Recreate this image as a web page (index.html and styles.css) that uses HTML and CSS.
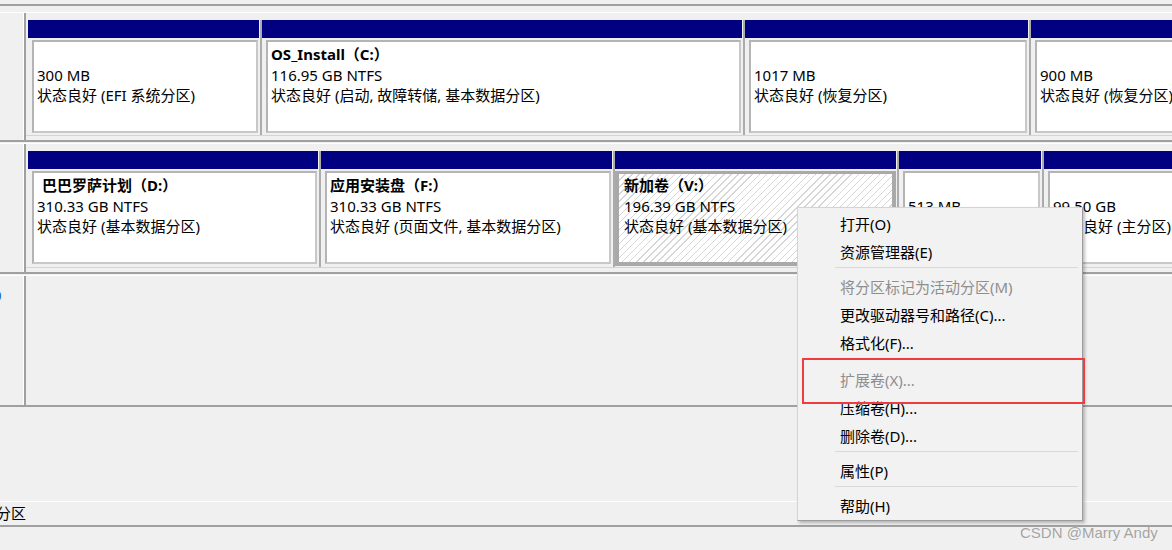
FILE: index.html
```html
<!DOCTYPE html>
<html lang="zh-CN">
<head>
    <meta charset="UTF-8">
    <title>磁盘管理</title>
    <link rel="stylesheet" href="styles.css">
</head>
<body>

    <div class="top-edge"></div>

    <!-- 磁盘 0 -->
    <div class="disk">
        <div class="disk-label"></div>
        <div class="parts">
            <div class="part w-231">
                <div class="bar"></div>
                <div class="vol">
                    <div class="name">&nbsp;</div>
                    <div>300 MB</div>
                    <div>状态良好 (EFI 系统分区)</div>
                </div>
            </div>
            <div class="part w-480">
                <div class="bar"></div>
                <div class="vol">
                    <div class="name">OS_Install（C:）</div>
                    <div>116.95 GB NTFS</div>
                    <div>状态良好 (启动, 故障转储, 基本数据分区)</div>
                </div>
            </div>
            <div class="part w-283">
                <div class="bar"></div>
                <div class="vol">
                    <div class="name">&nbsp;</div>
                    <div>1017 MB</div>
                    <div>状态良好 (恢复分区)</div>
                </div>
            </div>
            <div class="part w-200">
                <div class="bar"></div>
                <div class="vol">
                    <div class="name">&nbsp;</div>
                    <div>900 MB</div>
                    <div>状态良好 (恢复分区)</div>
                </div>
            </div>
        </div>
    </div>

    <!-- 磁盘 1 -->
    <div class="disk">
        <div class="disk-label"></div>
        <div class="parts">
            <div class="part w-290">
                <div class="bar"></div>
                <div class="vol">
                    <div class="name indent">巴巴罗萨计划（D:）</div>
                    <div>310.33 GB NTFS</div>
                    <div>状态良好 (基本数据分区)</div>
                </div>
            </div>
            <div class="part w-291">
                <div class="bar"></div>
                <div class="vol">
                    <div class="name">应用安装盘（F:）</div>
                    <div>310.33 GB NTFS</div>
                    <div>状态良好 (页面文件, 基本数据分区)</div>
                </div>
            </div>
            <div class="part w-281">
                <div class="bar"></div>
                <div class="vol selected">
                    <div class="name">新加卷（V:）</div>
                    <div>196.39 GB NTFS</div>
                    <div>状态良好 (基本数据分区)</div>
                </div>
            </div>
            <div class="part w-142">
                <div class="bar"></div>
                <div class="vol">
                    <div class="name">&nbsp;</div>
                    <div>513 MB</div>
                    <div>状态良好 (恢复分区)</div>
                </div>
            </div>
            <div class="part w-200">
                <div class="bar"></div>
                <div class="vol">
                    <div class="name">&nbsp;</div>
                    <div>99.50 GB</div>
                    <div>状态良好 (主分区)</div>
                </div>
            </div>
        </div>
    </div>

    <!-- CD-ROM -->
    <div class="disk disk-empty">
        <div class="disk-label">
            <div class="label-text">0</div>
        </div>
        <div class="parts"></div>
    </div>

    <div class="legend">
        <span class="legend-text">主分区</span>
    </div>

    <div class="menu">
        <div class="menu-item">打开(O)</div>
        <div class="menu-item">资源管理器(E)</div>
        <div class="menu-sep"></div>
        <div class="menu-item disabled">将分区标记为活动分区(M)</div>
        <div class="menu-item">更改驱动器号和路径(C)...</div>
        <div class="menu-item">格式化(F)...</div>
        <div class="menu-item disabled gap">扩展卷(X)...</div>
        <div class="menu-item">压缩卷(H)...</div>
        <div class="menu-item">删除卷(D)...</div>
        <div class="menu-sep"></div>
        <div class="menu-item">属性(P)</div>
        <div class="menu-sep"></div>
        <div class="menu-item">帮助(H)</div>
    </div>

    <div class="callout"></div>

    <div class="watermark">CSDN @Marry Andy</div>

</body>
</html>
```

FILE: styles.css
```css
body {
    margin: 0;
    width: 1172px;
    height: 550px;
    overflow: hidden;
    position: relative;
    background-color: #f0f0f0;
    font-family: "Noto Sans", "Noto Sans CJK SC", sans-serif;
    font-size: 15px;
    color: #000;
}
.top-edge {
    height: 4px;
    border-bottom: 2px solid #a0a0a0;
    margin-bottom: 6px;
}

/* disk rows */
.disk {
    display: flex;
    border-top: 1px solid #fff;
    border-bottom: 2px solid #a0a0a0;
    margin-bottom: 1px;
}
.disk-label {
    width: 24px;
    flex: none;
    border-right: 2px solid #a0a0a0;
    box-shadow: inset -1px 0 0 #fff;
    overflow: hidden;
}
.label-text {
    margin: 9px 0 0 -7px;
    line-height: 20px;
    color: #1d5fbf;
}
.parts {
    flex: 1;
    min-width: 0;
    display: flex;
    padding: 7px 0 0 2px;
    border-bottom: 1px solid #d4d4d4;
    margin-bottom: 4px;
    overflow: hidden;
}
.disk-empty .parts {
    height: 129px;
    padding: 0;
    border-bottom: none;
    margin-bottom: 0;
}

/* partitions */
.part {
    flex: none;
    display: flex;
    flex-direction: column;
}
.part + .part {
    margin-left: 1px;
    border-left: 2px solid #acacac;
}
.w-142 { width: 142px; }
.w-200 { width: 200px; }
.w-231 { width: 231px; }
.w-281 { width: 281px; }
.w-283 { width: 283px; }
.w-290 { width: 290px; }
.w-291 { width: 291px; }
.w-480 { width: 480px; }

.bar {
    height: 18px;
    background-color: #000080;
}
.vol {
    height: 93px;
    box-sizing: border-box;
    margin: 2px 1px 2px 4px;
    padding: 2px 3px;
    background-color: #fff;
    border: 2px solid #c8c8c8;
    border-top-color: #b4b4b4;
    border-left-color: #b4b4b4;
    line-height: 20.5px;
    white-space: nowrap;
    overflow: hidden;
}
.vol.selected {
    margin: 2px 0 1px 0;
    height: 95px;
    padding: 1px 5px;
    border: 4px solid #a9a9a9;
    border-top-width: 3px;
    background: repeating-linear-gradient(135deg, #fff 0 4px, #d6d6d6 4px 5px);
}
.name {
    font-weight: 700;
}
.name.indent {
    padding-left: 5px;
}

/* legend bar */
.legend {
    margin-top: 94px;
    height: 23px;
    line-height: 23px;
    border-top: 1px solid #fff;
    border-bottom: 2px solid #a0a0a0;
    overflow: hidden;
    white-space: nowrap;
}
.legend-text {
    display: inline-block;
    margin-left: -19px;
}

/* context menu */
.menu {
    position: absolute;
    left: 797px;
    top: 207px;
    width: 286px;
    height: 314px;
    box-sizing: border-box;
    padding-top: 2px;
    background-color: #f2f2f2;
    border: 1px solid #d4d4d4;
    border-right-color: #9c9c9c;
    border-bottom-color: #9c9c9c;
    box-shadow: 2px 2px 3px rgba(0, 0, 0, 0.25);
}
.menu-item {
    height: 28px;
    line-height: 28px;
    padding-left: 42px;
    white-space: nowrap;
}
.menu-item.disabled {
    color: #8e8e8e;
}
.menu-item.gap {
    margin-top: 9px;
}
.menu-sep {
    height: 1px;
    background-color: #d9d9d9;
    margin: 1px 4px 5px 37px;
}
.callout {
    position: absolute;
    left: 802px;
    top: 358px;
    width: 283px;
    height: 46px;
    box-sizing: border-box;
    border: 2px solid #f03c40;
}
.watermark {
    position: absolute;
    left: 1020px;
    top: 523px;
    font-family: "Liberation Sans", sans-serif;
    font-size: 15px;
    line-height: 20px;
    color: #a3a3a3;
    text-shadow: 0 0 1px #fff;
}
```
